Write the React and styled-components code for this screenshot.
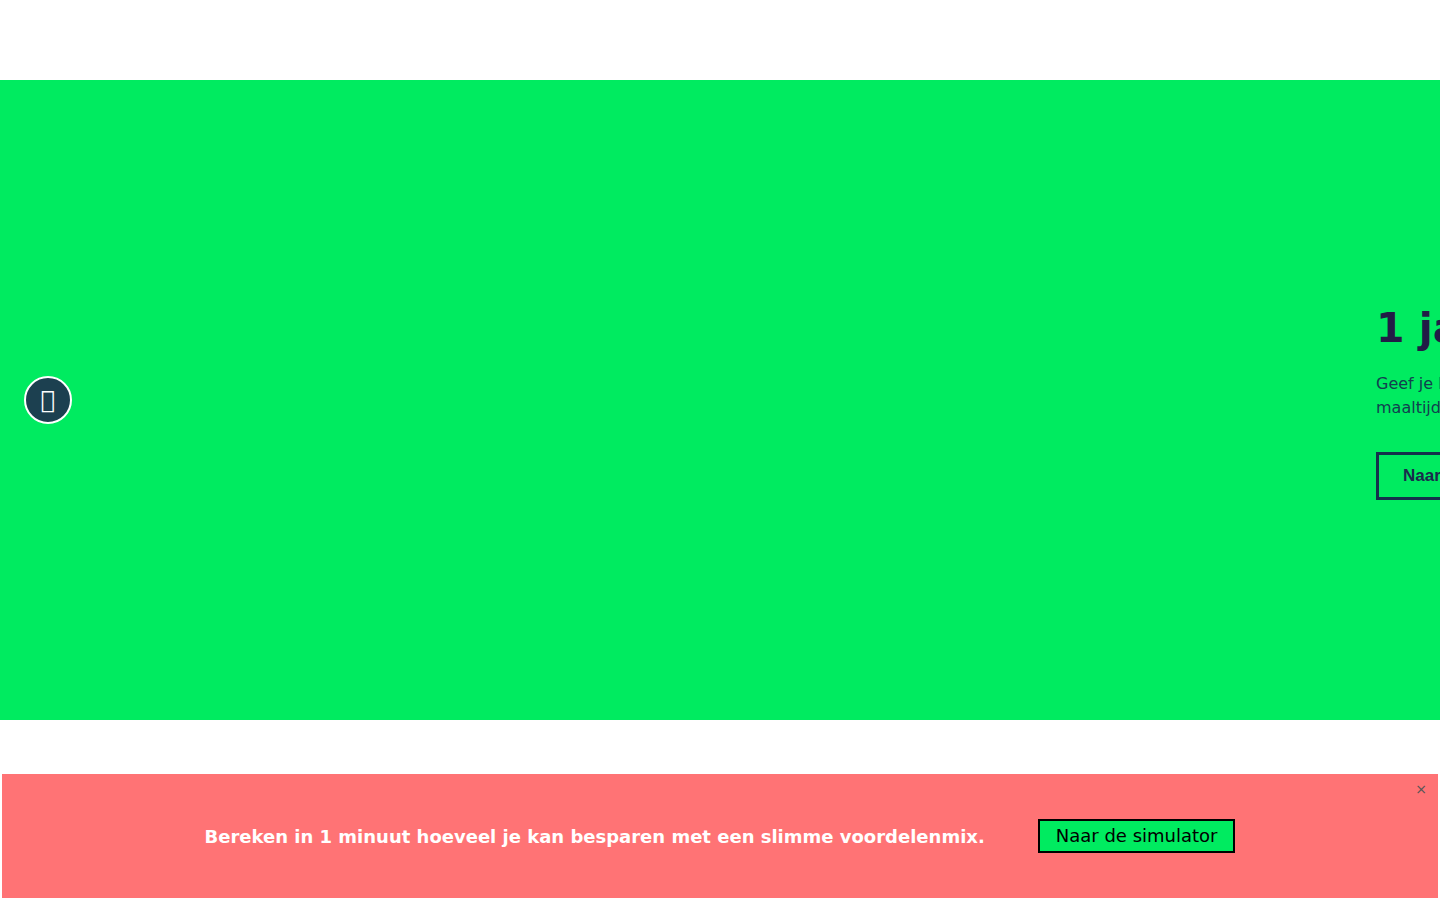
import React from 'react'
import styled, { createGlobalStyle } from 'styled-components'

const GlobalStyle = createGlobalStyle`
  html, body {
    margin: 0;
    height: 100%;
    overflow: hidden;
    background: #fff;
    font-family: "DejaVu Sans", sans-serif;
  }
`

const Page = styled.div`
  padding-top: 80px;
  height: 900px;
  box-sizing: border-box;
`

const Hero = styled.section`
  position: relative;
  display: flex;
  align-items: center;
  height: 640px;
  padding-left: 1376px;
  overflow: hidden;
  background: #00eb60;
`

const Slide = styled.div`
  flex: 0 0 640px;
`

const Title = styled.h2`
  margin: 0 0 16px;
  font-size: 41px;
  line-height: 56px;
  font-weight: 700;
  color: #221c46;
  white-space: nowrap;
`

const Intro = styled.p`
  margin: 0 0 32px;
  font-size: 16px;
  line-height: 24px;
  color: #12404f;
`

const HeroButton = styled.a`
  display: inline-block;
  box-sizing: border-box;
  height: 48px;
  padding: 0 24px;
  border: 3px solid #14304c;
  font-family: "Liberation Sans", Arial, sans-serif;
  font-size: 17px;
  line-height: 42px;
  font-weight: 700;
  color: #1a2a4c;
  text-decoration: none;
  white-space: nowrap;
`

const ArrowButton = styled.button`
  position: absolute;
  left: 24px;
  top: 50%;
  transform: translateY(-50%);
  width: 48px;
  height: 48px;
  padding: 0;
  box-sizing: border-box;
  border: 2px solid #fff;
  border-radius: 50%;
  background: #1c4050;
  color: #fff;
  font-family: "DejaVu Sans", sans-serif;
  font-size: 24px;
  line-height: 1;
`

const Banner = styled.aside`
  position: fixed;
  left: 2px;
  right: 2px;
  bottom: 2px;
  height: 124px;
  display: flex;
  align-items: center;
  justify-content: center;
  gap: 53px;
  background: #ff7375;
`

const BannerText = styled.p`
  margin: 0;
  font-size: 18px;
  font-weight: 700;
  color: #fff;
  white-space: nowrap;
`

const BannerButton = styled.a`
  box-sizing: border-box;
  height: 34px;
  padding: 0 16px;
  border: 2px solid #000;
  background: #00eb60;
  color: #000;
  font-size: 18px;
  line-height: 29px;
  text-decoration: none;
  white-space: nowrap;
`

const CloseButton = styled.button`
  position: absolute;
  top: 7px;
  right: 11px;
  padding: 0;
  border: 0;
  background: none;
  color: #555;
  font-family: "DejaVu Sans", sans-serif;
  font-size: 14px;
  line-height: 16px;
`

export default function App() {
  return (
    <Page>
      <GlobalStyle />
      <Hero>
        <ArrowButton aria-label="Vorige">{'\uf104'}</ArrowButton>
        <Slide>
          <Title>1 jaar gratis maaltijdcheques</Title>
          <Intro>
            Geef je bedienden een extraatje met onze digitale
            <br />
            maaltijdcheques, zonder extra kosten.
          </Intro>
          <HeroButton href="#">Naar de simulator</HeroButton>
        </Slide>
      </Hero>
      <Banner>
        <BannerText>Bereken in 1 minuut hoeveel je kan besparen met een slimme voordelenmix.</BannerText>
        <BannerButton href="#">Naar de simulator</BannerButton>
        <CloseButton aria-label="Sluiten">×</CloseButton>
      </Banner>
    </Page>
  )
}
